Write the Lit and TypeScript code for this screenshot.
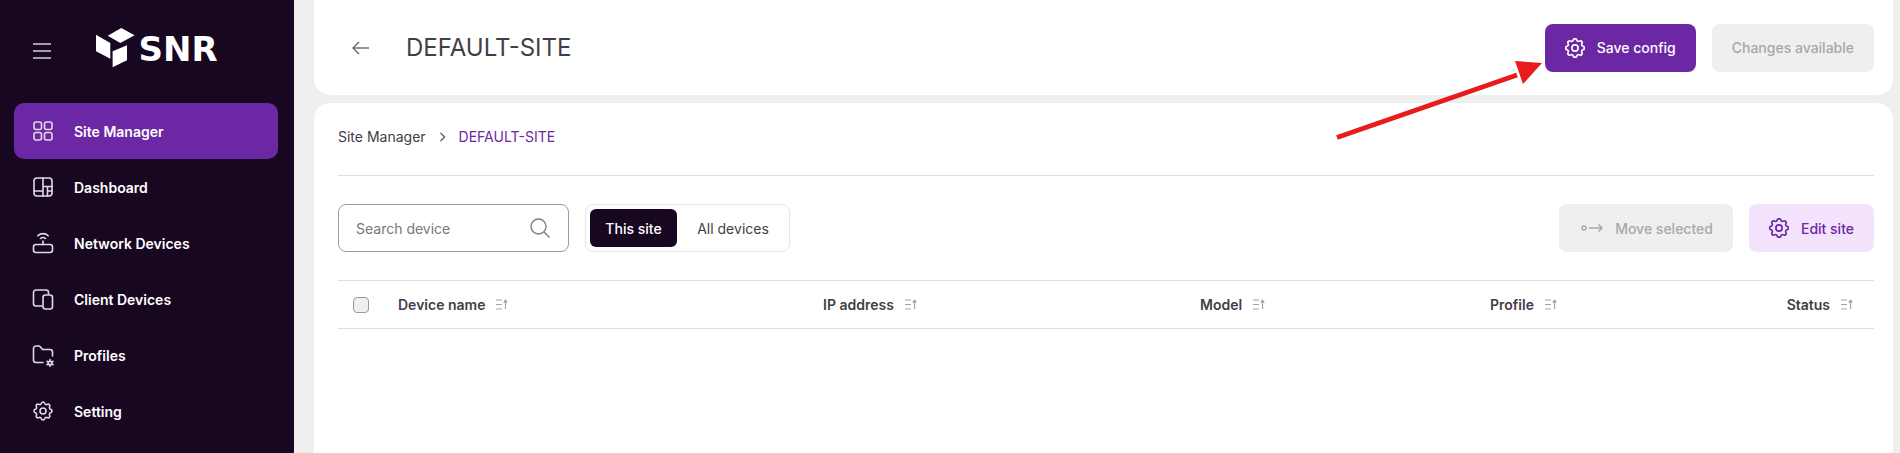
import { css, html, LitElement, svg, TemplateResult } from "lit";
import { customElement } from "lit/decorators.js";

const gear = svg`<path d="M10.325 4.317c.426-1.756 2.924-1.756 3.35 0a1.724 1.724 0 0 0 2.573 1.066c1.543-.94 3.31.826 2.37 2.37a1.724 1.724 0 0 0 1.065 2.572c1.756.426 1.756 2.924 0 3.35a1.724 1.724 0 0 0-1.066 2.573c.94 1.543-.826 3.31-2.37 2.37a1.724 1.724 0 0 0-2.572 1.065c-.426 1.756-2.924 1.756-3.35 0a1.724 1.724 0 0 0-2.573-1.066c-1.543.94-3.31-.826-2.37-2.37a1.724 1.724 0 0 0-1.065-2.572c-1.756-.426-1.756-2.924 0-3.35a1.724 1.724 0 0 0 1.066-2.573c-.94-1.543.826-3.31 2.37-2.37 1 .608 2.296.07 2.572-1.065z"/><circle cx="12" cy="12" r="3"/>`;

const icons: Record<string, TemplateResult> = {
    grid: svg`<rect x="3" y="3" width="7.500" height="7.500" rx="2"/><rect x="13.500" y="3" width="7.500" height="7.500" rx="2"/><rect x="3" y="13.500" width="7.500" height="7.500" rx="2"/><rect x="13.500" y="13.500" width="7.500" height="7.500" rx="2"/>`,
    dashboard: svg`<rect x="3" y="3" width="18" height="18" rx="3"/><path d="M12 3v18M3 16h9M12 11.500h9M16.500 11.500V21M16.500 16h4.500"/>`,
    router: svg`<rect x="2.500" y="13.500" width="19" height="8" rx="2.500"/><path d="M12 13.500V10M9.500 7.500a3.500 3.500 0 0 1 5 0M6.800 4.800a7.400 7.400 0 0 1 10.400 0"/>`,
    devices: svg`<path d="M11 19H5a2.500 2.500 0 0 1-2.500-2.500V5.500A2.500 2.500 0 0 1 5 3h10a2.500 2.500 0 0 1 2.500 2.500V7"/><rect x="12" y="8" width="9.500" height="14" rx="2.500"/>`,
    folder: svg`<path d="M12 19.500H5A2.500 2.500 0 0 1 2.500 17V5.500A2.500 2.500 0 0 1 5 3h3.500l3 3.500H19A2.500 2.500 0 0 1 21.500 9v4"/><circle cx="19" cy="20" r="1.800"/><path d="M19 16.500v1.500M19 22v1.500M16 18.300l1.300.8M20.700 20.900l1.300.8M16 21.700l1.300-.8M20.700 19.100l1.300-.8"/>`,
    gear,
};

@customElement("app-root")
export class AppRoot extends LitElement {
    private icon(name: string): TemplateResult {
        return html`<svg class="icon" viewBox="0 0 24 24">${icons[name]}</svg>`;
    }

    private btnGear(): TemplateResult {
        return html`<svg class="icon" viewBox="2.400 2.400 19.200 19.200">${gear}</svg>`;
    }

    private sortIcon(): TemplateResult {
        return html`<svg class="sort" viewBox="0 0 13 13"><path d="M1 2h6M1 6.500h6M1 11h6M10.500 11V2.500M8.700 4.500l1.800-2.200 1.800 2.200"/></svg>`;
    }

    private navItem(name: string, label: string, active = false): TemplateResult {
        return html`<div class="nav-item ${active ? "active" : ""}">${this.icon(name)}<span>${label}</span></div>`;
    }

    private column(label: string): TemplateResult {
        return html`<div class="col"><span>${label}</span>${this.sortIcon()}</div>`;
    }

    protected render(): TemplateResult {
        return html`
            <aside class="sidebar">
                <div class="brand">
                    <svg class="menu" viewBox="0 0 18 16"><path d="M0 1h18M0 8h18M0 15h18"/></svg>
                    <div class="logo">
                        <svg viewBox="0 0 40 41" width="40" height="41">
                            <path d="M25.300 0l13.300 7.300-14.300 7.700-12.600-7.300z"/>
                            <path d="M0 6.700l14.300 8.300v15.700L0 23.300z"/>
                            <path d="M16.600 23.300l14.400-6v15l-14.400 7z"/>
                        </svg>
                        <span class="logo-text">SNR</span>
                    </div>
                </div>
                <nav class="nav">
                    ${this.navItem("grid", "Site Manager", true)}
                    ${this.navItem("dashboard", "Dashboard")}
                    ${this.navItem("router", "Network Devices")}
                    ${this.navItem("devices", "Client Devices")}
                    ${this.navItem("folder", "Profiles")}
                    ${this.navItem("gear", "Setting")}
                </nav>
            </aside>
            <main class="main">
                <header class="card top-bar">
                    <svg class="back" viewBox="0 0 18 14"><path d="M17 7H1M7 1L1 7l6 6"/></svg>
                    <h1>DEFAULT-SITE</h1>
                    <div class="actions">
                        <button class="btn primary">${this.btnGear()}Save config</button>
                        <button class="btn disabled">Changes available</button>
                    </div>
                </header>
                <section class="card content">
                    <div class="crumbs">
                        <span>Site Manager</span>
                        <svg class="chev" viewBox="0 0 8 12"><path d="M1.500 1l5 5-5 5"/></svg>
                        <span class="current">DEFAULT-SITE</span>
                    </div>
                    <div class="toolbar">
                        <label class="search">
                            <span>Search device</span>
                            <svg viewBox="0 0 20 20"><circle cx="8.500" cy="8.500" r="7.500"/><path d="M14 14l5.500 5.500"/></svg>
                        </label>
                        <div class="segments">
                            <span class="seg on">This site</span>
                            <span class="seg">All devices</span>
                        </div>
                        <div class="spacer"></div>
                        <button class="btn disabled move-btn">
                            <svg class="move" viewBox="0 0 22 12"><circle cx="3" cy="6" r="2"/><path d="M8 6h13M17.500 2.500L21 6l-3.500 3.500"/></svg>
                            Move selected
                        </button>
                        <button class="btn soft">${this.btnGear()}Edit site</button>
                    </div>
                    <div class="table-head">
                        <span class="check"></span>
                        ${this.column("Device name")}
                        ${this.column("IP address")}
                        ${this.column("Model")}
                        ${this.column("Profile")}
                        ${this.column("Status")}
                    </div>
                </section>
            </main>
            <svg class="callout" viewBox="0 0 220 90" width="220" height="90">
                <path d="M2 80.500L182 18" />
                <polygon points="207,6 180,4 188,27" />
            </svg>
        `;
    }

    static styles = css`
        :host {
            background: #efefef;
            color: #3f3f46;
            display: flex;
            font-family: Inter, "Liberation Sans", sans-serif;
            font-size: 14px;
            height: 453px;
            overflow: hidden;
            position: relative;
        }
        .sidebar {
            background: #170721;
            box-sizing: border-box;
            color: #fff;
            flex: none;
            padding: 0 16px 0 14px;
            width: 294px;
        }
        .brand {
            align-items: center;
            display: flex;
            height: 103px;
            padding-left: 19px;
        }
        .menu {
            fill: none;
            height: 16px;
            margin-top: -1px;
            stroke: #d6d0da;
            stroke-width: 1.500;
            width: 18px;
        }
        .logo {
            align-items: center;
            display: flex;
            gap: 3px;
            margin: -6px 0 0 44.500px;
        }
        .logo svg {
            fill: #fff;
        }
        .logo-text {
            font-family: "DejaVu Sans", sans-serif;
            font-size: 34px;
            font-weight: 700;
            line-height: 1;
        }
        .nav-item {
            align-items: center;
            border-radius: 10px;
            display: flex;
            font-weight: 600;
            gap: 19px;
            height: 56px;
            padding-left: 17px;
        }
        .nav-item.active {
            background: #6c27a5;
        }
        .icon {
            fill: none;
            flex: none;
            height: 24px;
            stroke: currentColor;
            stroke-linecap: round;
            stroke-linejoin: round;
            stroke-width: 1.600;
            width: 24px;
        }
        .btn .icon {
            height: 20px;
            width: 20px;
        }
        .nav-item .icon {
            stroke: #e0dae4;
        }
        .main {
            display: flex;
            flex: 1;
            flex-direction: column;
            gap: 8px;
            min-width: 0;
            padding: 0 7px 0 20px;
        }
        .card {
            background: #fff;
        }
        .top-bar {
            align-items: center;
            border-radius: 0 0 16px 16px;
            box-sizing: border-box;
            display: flex;
            flex: none;
            height: 95px;
            padding: 0 19px 0 38px;
        }
        .back {
            fill: none;
            height: 14px;
            stroke: #707070;
            stroke-width: 1.500;
            width: 18px;
        }
        h1 {
            font-size: 24px;
            font-weight: 400;
            margin: 0 0 0 36px;
        }
        .actions {
            display: flex;
            gap: 16px;
            margin-left: auto;
        }
        .btn {
            align-items: center;
            border: 0;
            border-radius: 8px;
            box-sizing: border-box;
            color: inherit;
            display: flex;
            font: inherit;
            font-weight: 500;
            gap: 12px;
            height: 48px;
            padding: 0 20px;
        }
        .move-btn {
            padding-left: 22px;
        }
        .primary {
            background: #6c27a5;
            color: #fff;
        }
        .disabled {
            background: #efefef;
            color: #a8a8a8;
        }
        .soft {
            background: #f3e3fd;
            color: #6c27a5;
        }
        .move {
            fill: none;
            height: 12px;
            stroke: #a8a8a8;
            stroke-width: 1.500;
            width: 22px;
        }
        .content {
            border-radius: 16px 16px 0 0;
            flex: 1;
            padding: 0 19px 0 24px;
        }
        .crumbs {
            align-items: center;
            border-bottom: 1px solid #e0e0e0;
            display: flex;
            gap: 13px;
            height: 67px;
            padding-bottom: 5px;
        }
        .chev {
            fill: none;
            height: 10px;
            stroke: #52525b;
            stroke-width: 1.500;
            width: 7px;
        }
        .current {
            color: #6c27a5;
        }
        .toolbar {
            align-items: center;
            display: flex;
            gap: 16px;
            padding-top: 28px;
        }
        .spacer {
            flex: 1;
        }
        .search {
            align-items: center;
            border: 1px solid #9b9b9b;
            border-radius: 8px;
            box-sizing: border-box;
            color: #78787c;
            display: flex;
            height: 48px;
            justify-content: space-between;
            padding: 0 18px 0 17px;
            width: 231px;
        }
        .search svg {
            fill: none;
            height: 20px;
            stroke: #808080;
            stroke-width: 1.400;
            width: 20px;
        }
        .segments {
            align-items: center;
            border: 1px solid #e6e6e6;
            border-radius: 8px;
            box-sizing: border-box;
            display: flex;
            height: 48px;
            padding: 0 4px;
            width: 205px;
        }
        .seg {
            align-items: center;
            border-radius: 6px;
            display: flex;
            height: 38px;
            justify-content: center;
            width: 87px;
        }
        .seg + .seg {
            flex: 1;
            padding-left: 4px;
        }
        .seg.on {
            background: #170721;
            color: #fff;
            font-weight: 500;
        }
        .table-head {
            align-items: center;
            border-bottom: 1px solid #e0e0e0;
            border-top: 1px solid #e0e0e0;
            display: grid;
            font-weight: 600;
            grid-template-columns: 45px 425px 377px 290px 1fr auto;
            height: 47px;
            margin-top: 28px;
            padding: 0 21px 0 15px;
        }
        .check {
            background: #efefef;
            border: 1px solid #9b9b9b;
            border-radius: 4px;
            box-sizing: border-box;
            height: 16px;
            width: 16px;
        }
        .col {
            align-items: center;
            display: flex;
            gap: 10px;
        }
        .sort {
            fill: none;
            height: 13px;
            stroke: #a3a3a3;
            stroke-width: 1.200;
            width: 13px;
        }
        .callout {
            left: 1335px;
            position: absolute;
            top: 57px;
        }
        .callout path {
            fill: none;
            stroke: #e81c1c;
            stroke-width: 5;
        }
        .callout polygon {
            fill: #e81c1c;
        }
    `;
}
